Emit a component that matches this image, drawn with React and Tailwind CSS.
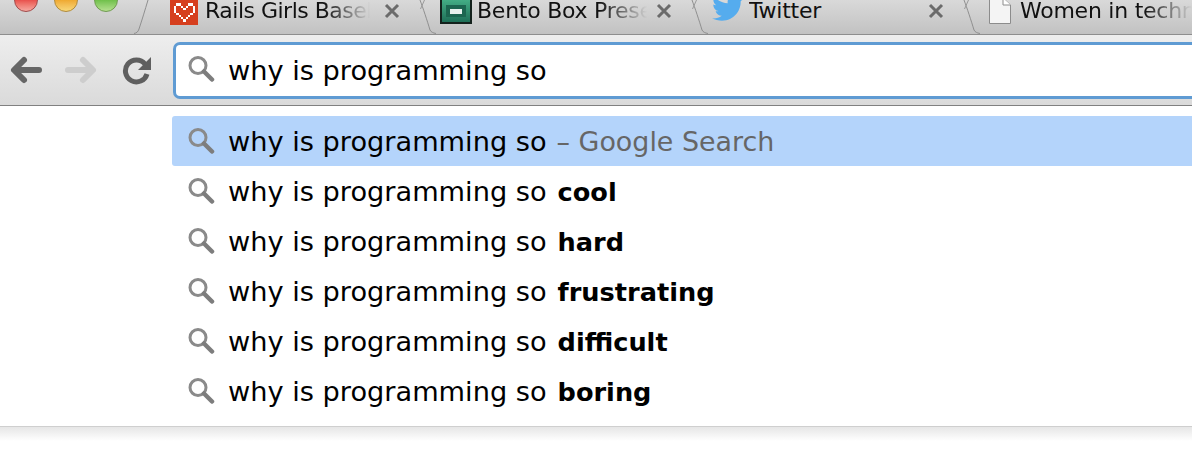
import React from 'react';

const SearchIcon = ({ className = "" }) => (
    <svg width="28" height="28" viewBox="0 0 28 28" className={`shrink-0 ${className}`}>
        <circle cx="11" cy="10.5" r="8" fill="none" stroke="#8a8a8a" strokeWidth="3" />
        <path d="M17 16.5 L25 24.5" stroke="#7d7d7d" strokeWidth="4.5" strokeLinecap="round" />
    </svg>
);

// tab edge, the short stroke at the top is the neighbour tab's edge crossing it
const Slant = () => (
    <svg width="18" height="34" viewBox="0 0 18 34" className="shrink-0">
        <path d="M2 0 C5 8 9 20 12 30 C13 32 15 33 18 33.5" fill="none" stroke="#8f8f8f" strokeWidth="1" />
        <path d="M6.500 0 L2.500 9" fill="none" stroke="#9a9a9a" strokeWidth="1" />
    </svg>
);

const CloseIcon = () => (
    <svg width="16" height="16" viewBox="0 0 16 16" className="shrink-0">
        <path d="M2 2 L14 14 M14 2 L2 14" stroke="#6b6b6b" strokeWidth="3" />
    </svg>
);

const heartPixels = [
    ".XX...XX.",
    "X..X.X..X",
    "X...X...X",
    "X.......X",
    ".X.....X.",
    "..X...X..",
    "...X.X...",
    "....X....",
];

const HeartIcon = () => (
    <div className="w-[28px] h-[25px] bg-[#d63f1e] shrink-0 flex items-center justify-center">
        <svg width="21" height="19" viewBox="0 0 9 8" shapeRendering="crispEdges">
            {heartPixels.map((row, y) =>
                row.split("").map((c, x) =>
                    c === "X" ? <rect key={`${x}-${y}`} x={x} y={y} width="1" height="1" fill="#fff" /> : null
                )
            )}
        </svg>
    </div>
);

const BentoIcon = () => (
    <div className="w-[32px] h-[24px] bg-gradient-to-b from-[#43ad85] to-[#1f7058] border-2 border-t-0 border-[#14221d] shrink-0 flex items-center justify-center">
        <div className="w-[20px] h-[12px] bg-[#1c6650] flex items-center justify-center">
            <div className="w-[12px] h-[5px] bg-[#e8f2ee]" />
        </div>
    </div>
);

const TwitterIcon = () => (
    <svg width="32" height="26" viewBox="0 0 24 19" className="shrink-0 -translate-y-[4px]">
        <path d="M24 2.3c-.9.4-1.8.7-2.8.8 1-.6 1.800-1.600 2.200-2.700-1 .6-2 1-3.100 1.200C19.300.6 18 0 16.600 0c-2.700 0-4.900 2.200-4.900 4.900 0 .4 0 .8.100 1.100C7.700 5.800 4.100 3.900 1.700.9c-.4.700-.7 1.600-.7 2.500 0 1.700.9 3.200 2.200 4.100-.8 0-1.600-.2-2.200-.6v.1c0 2.400 1.700 4.400 3.900 4.800-.4.100-.8.200-1.300.2-.3 0-.6 0-.9-.1.600 2 2.400 3.400 4.600 3.400-1.700 1.300-3.800 2.100-6.100 2.100-.4 0-.8 0-1.200-.1C2.200 18.200 4.800 19 7.500 19c9.100 0 14-7.500 14-14v-.6c1-.7 1.800-1.500 2.500-2.100z" fill="#55acee" />
    </svg>
);

const DocIcon = () => (
    <svg width="24" height="24" viewBox="0 0 24 24" className="shrink-0">
        <path d="M1.500 -2 H15 L22.500 5 V23.500 H1.500 Z" fill="#f4f4f4" stroke="#8c8c8c" />
        <path d="M15 -2 V5 H22.500" fill="#fff" stroke="#8c8c8c" />
    </svg>
);

const Tab = ({ icon, title, titleWidth, closable = true, fade = true, gap, iconPad }) => (
    <div className="w-[272px] shrink-0 h-[34px] flex items-start">
        <Slant />
        <div className={`flex items-center h-[24px] ${gap} ${iconPad}`}>
            {icon}
            <span className={`${titleWidth} overflow-hidden whitespace-nowrap text-[22px] leading-[24px] tracking-[-0.25px] text-[#111] -mt-[2px] ${fade ? "[mask-image:linear-gradient(to_right,black_72%,transparent_100%)]" : ""}`}>{title}</span>
        </div>
        {closable && <div className="h-[22px] flex items-center ml-auto mr-[18px]"><CloseIcon /></div>}
    </div>
);

const suggestions = ["cool", "hard", "frustrating", "difficult", "boring"];

const Row = ({ selected, children }) => (
    <div className={`h-[50px] flex items-center pl-[15px] gap-[13px] text-[27.2px] text-black ${selected ? "bg-[#b4d4fb] rounded-l-[3px]" : ""}`}>
        <SearchIcon />
        <div className="flex items-baseline whitespace-pre pt-[3px]">why is programming so{children}</div>
    </div>
);

export default function App() {
    return (
        <div className="w-[1192px] h-[468px] overflow-hidden bg-white font-['DejaVu_Sans',sans-serif]">
            {/* tab strip */}
            <div className="h-[35px] flex border-b border-[#8e8e8e] bg-gradient-to-b from-[#d9d9d9] to-[#c2c2c2] overflow-hidden">
                <div className="w-[134px] shrink-0 flex gap-[16px] pl-[14px] -mt-[12px]">
                    <div className="w-[24px] h-[24px] rounded-full border border-[#a04a4a] bg-gradient-to-b from-[#b82020] via-[#e8504c] to-[#f5a8a0]" />
                    <div className="w-[24px] h-[24px] rounded-full border border-[#b08a3a] bg-gradient-to-b from-[#c47a10] via-[#efa92f] to-[#f8d878]" />
                    <div className="w-[24px] h-[24px] rounded-full border border-[#6f9a50] bg-gradient-to-b from-[#3f8a20] via-[#6fc04a] to-[#b5e08f]" />
                </div>
                <div className="flex">
                    <div className="w-[284px] shrink-0 h-[34px] flex items-start">
                        <svg width="18" height="34" viewBox="0 0 18 34" className="shrink-0">
                            <path d="M14 0 C11 10 8 20 5 29 C4 32 2.500 33 0 33.500" fill="none" stroke="#8f8f8f" strokeWidth="1" />
                        </svg>
                        <div className="flex items-center h-[24px] gap-[7px] pl-[18px]">
                            <HeartIcon />
                            <span className="w-[165px] overflow-hidden whitespace-nowrap text-[22px] leading-[24px] tracking-[-0.5px] text-[#111] -mt-[2px] [mask-image:linear-gradient(to_right,black_72%,transparent_100%)]">Rails Girls Basel</span>
                        </div>
                        <div className="h-[22px] flex items-center ml-auto mr-[18px]"><CloseIcon /></div>
                    </div>
                    <Tab titleWidth="w-[170px]" icon={<BentoIcon />} title="Bento Box Presentation" iconPad="pl-[4px]" gap="gap-[5px]" />
                    <Tab titleWidth="w-[170px]" icon={<TwitterIcon />} title="Twitter" fade={false} iconPad="pl-[4px]" gap="gap-[5px]" />
                    <Tab titleWidth="w-[172px]" icon={<DocIcon />} title="Women in technology" closable={false} iconPad="pl-[8px]" gap="gap-[8px]" />
                </div>
            </div>
            {/* toolbar */}
            <div className="h-[71px] flex items-center border-b border-[#808080] bg-gradient-to-b from-[#eeeeee] to-[#dadada]">
                <div className="w-[173px] shrink-0 flex items-center pl-[9px]">
                    <svg width="34" height="30" viewBox="0 0 34 30" className="shrink-0">
                        <path d="M30 15 H6 M15 5 L5 15 L15 25" fill="none" stroke="#666" strokeWidth="6" strokeLinecap="round" strokeLinejoin="round" />
                    </svg>
                    <svg width="34" height="30" viewBox="0 0 34 30" className="shrink-0 ml-[21px]">
                        <path d="M4 15 H28 M19 5 L29 15 L19 25" fill="none" stroke="#cdcdcd" strokeWidth="6" strokeLinecap="round" strokeLinejoin="round" />
                    </svg>
                    <svg width="30" height="30" viewBox="0 0 30 30" className="shrink-0 ml-[24px]">
                        <path d="M23 9 A11 11 0 1 0 25 19" fill="none" stroke="#5f5f5f" strokeWidth="5" />
                        <path d="M29 2 V15 H16 Z" fill="#5f5f5f" />
                    </svg>
                </div>
                <div className="flex-1 h-[57px] flex items-center bg-white border-[3px] border-r-0 border-[#5f9bd3] rounded-l-[7px] pl-[11px] gap-[13px] text-[27.2px] text-black">
                    <SearchIcon className="-translate-y-[1px]" />
                    <span className="whitespace-nowrap pt-[2px]">why is programming so</span>
                </div>
            </div>
            {/* suggestions */}
            <div className="h-[321px] pt-[10px] pl-[172px] bg-white border-b border-[#cfcfcf]">
                <Row selected>
                    <span className="text-[#666] ml-[10px] text-[26.9px]">– Google Search</span>
                </Row>
                {suggestions.map((s) => (
                    <Row key={s}>
                        <b className="ml-[11px] text-[25.6px]">{s}</b>
                    </Row>
                ))}
            </div>
            <div className="h-[14px] bg-gradient-to-b from-[#e6e6e6] to-white" />
        </div>
    );
}
